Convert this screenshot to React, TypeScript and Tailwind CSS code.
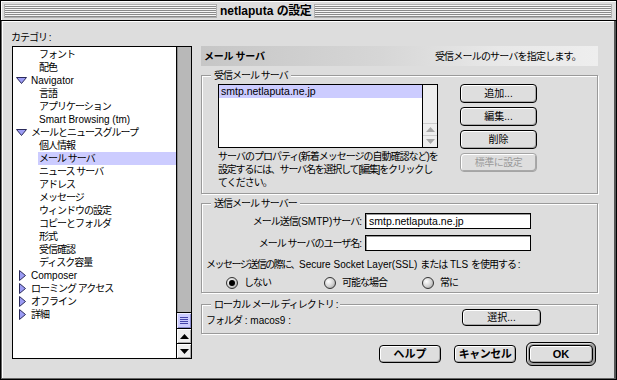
import React from 'react';

type Item = { t: string; lvl: 0 | 1; open?: boolean; sel?: boolean; latin?: boolean };

const items: Item[] = [
  { t: 'フォント', lvl: 1 },
  { t: '配色', lvl: 1 },
  { t: 'Navigator', lvl: 0, open: true, latin: true },
  { t: '言語', lvl: 1 },
  { t: 'アプリケーション', lvl: 1 },
  { t: 'Smart Browsing (tm)', lvl: 1, latin: true },
  { t: 'メールとニュースグループ', lvl: 0, open: true },
  { t: '個人情報', lvl: 1 },
  { t: 'メール サーバ', lvl: 1, sel: true },
  { t: 'ニュース サーバ', lvl: 1 },
  { t: 'アドレス', lvl: 1 },
  { t: 'メッセージ', lvl: 1 },
  { t: 'ウィンドウの設定', lvl: 1 },
  { t: 'コピーとフォルダ', lvl: 1 },
  { t: '形式', lvl: 1 },
  { t: '受信確認', lvl: 1 },
  { t: 'ディスク容量', lvl: 1 },
  { t: 'Composer', lvl: 0, latin: true },
  { t: 'ローミング アクセス', lvl: 0 },
  { t: 'オフライン', lvl: 0 },
  { t: '詳細', lvl: 0 },
];

function J({ children }: { children: React.ReactNode }) {
  return <span className="tracking-[-1px]">{children}</span>;
}

function DownTri() {
  return (
    <svg width="11" height="7" viewBox="0 0 11 7">
      <polygon points="0.5,0.5 10.5,0.5 5.5,6.5" fill="#9c9cf4" stroke="#2a2a5a" strokeWidth="1" />
    </svg>
  );
}

function RightTri() {
  return (
    <svg width="7" height="11" viewBox="0 0 7 11">
      <polygon points="0.5,0.5 6.5,5.5 0.5,10.5" fill="#9c9cf4" stroke="#2a2a5a" strokeWidth="1" />
    </svg>
  );
}

function ArrowUp({ color }: { color: string }) {
  return (
    <svg width="9" height="5" viewBox="0 0 9 5">
      <polygon points="4.5,0 9,5 0,5" fill={color} />
    </svg>
  );
}

function ArrowDown({ color }: { color: string }) {
  return (
    <svg width="9" height="5" viewBox="0 0 9 5">
      <polygon points="0,0 9,0 4.5,5" fill={color} />
    </svg>
  );
}

function Stripes({ className }: { className: string }) {
  return (
    <div
      className={`h-[14px] border border-[#b0b0b0] bg-[image:repeating-linear-gradient(to_bottom,#f6f6f6_0px,#f6f6f6_1px,#8a8a8a_1px,#8a8a8a_2px)] ${className}`}
    />
  );
}

function Btn({
  children,
  className,
  disabled,
}: {
  children: React.ReactNode;
  className: string;
  disabled?: boolean;
}) {
  return (
    <div
      className={`flex items-center justify-center rounded-[4px] border bg-[#dedede] shadow-[inset_1px_1px_0_#ffffff,inset_-1px_-1px_0_#a8a8a8] whitespace-nowrap ${
        disabled ? 'border-[#a4a4a4] text-[#9a9a9a]' : 'border-black text-black'
      } ${className}`}
    >
      {children}
    </div>
  );
}

function Radio({ on }: { on?: boolean }) {
  return (
    <div className="w-[12px] h-[12px] rounded-full border border-[#333333] bg-[image:radial-gradient(circle_at_35%_35%,#ffffff,#d0d0d0_55%,#8e8e8e)] flex items-center justify-center">
      {on && <div className="w-[6px] h-[6px] rounded-full bg-black" />}
    </div>
  );
}

function Group({
  title,
  className,
  children,
}: {
  title: string;
  className: string;
  children: React.ReactNode;
}) {
  return (
    <div
      className={`relative border border-[#9a9a9a] shadow-[inset_1px_1px_0_#ffffff,1px_1px_0_#ffffff] ${className}`}
    >
      <div className="absolute left-[9px] -top-[7px] px-[3px] bg-[#dddddd] leading-[13px] whitespace-nowrap tracking-[-1px]">
        {title}
      </div>
      {children}
    </div>
  );
}

export default function App() {
  return (
    <div className="w-[617px] h-[380px] bg-[#dddddd] border border-black flex flex-col text-[10px] text-black font-['Liberation_Sans','Noto_Sans_CJK_JP',sans-serif] overflow-hidden">
      {/* Title bar */}
      <div className="h-[20px] flex items-center pl-[3px] pr-[4px] border-b border-black shadow-[inset_1px_1px_0_#ffffff]">
        <Stripes className="w-[213px]" />
        <div className="px-[3px] text-[12px] font-bold leading-[14px] whitespace-nowrap">
          netlaputa <span className="tracking-[-0.5px]">の設定</span>
        </div>
        <Stripes className="flex-1" />
      </div>

      {/* Content */}
      <div className="flex-1 flex border-l border-[#666666] border-r-2 border-r-[#555555] border-b border-b-[#666666] shadow-[inset_1px_1px_0_#ffffff]">
        {/* Left column */}
        <div className="ml-[9px] w-[181px] pt-[10px] flex flex-col">
          <div className="h-[13px] leading-[13px] whitespace-nowrap">
            <J>カテゴリ :</J>
          </div>
          <div className="mt-[2px] h-[313px] ml-[1px] border border-black bg-white flex">
            <div className="flex-1 pt-[1px]">
              {items.map((it, i) =>
                it.lvl === 1 ? (
                  <div key={i} className="h-[13px] pl-[25px]">
                    <div
                      className={`h-[13px] leading-[13px] pl-[1px] whitespace-nowrap ${
                        it.sel ? 'bg-[#ccccff]' : ''
                      } ${it.latin ? '' : 'tracking-[-1px]'}`}
                    >
                      {it.t}
                    </div>
                  </div>
                ) : (
                  <div key={i} className="h-[13px] leading-[13px] flex items-center pl-[3px] whitespace-nowrap">
                    <div className="w-[15px] h-[13px] flex items-center">
                      {it.open ? (
                        <DownTri />
                      ) : (
                        <div className="ml-[3px] flex items-center">
                          <RightTri />
                        </div>
                      )}
                    </div>
                    <span className={it.latin ? '' : 'tracking-[-1px]'}>{it.t}</span>
                  </div>
                ),
              )}
            </div>
            <div className="w-[15px] border-l border-black flex flex-col">
              <div className="flex-1 bg-[#b8b8b8] shadow-[inset_1px_0_0_#8c8c8c]" />
              <div className="h-[16px] bg-[#ccccff] border-t border-black flex flex-col items-center justify-center gap-[1px] shadow-[inset_1px_1px_0_#eeeeff,inset_-1px_-1px_0_#8888cc]">
                <div className="w-[8px] h-[1px] bg-[#4444aa]" />
                <div className="w-[8px] h-[1px] bg-[#4444aa]" />
                <div className="w-[8px] h-[1px] bg-[#4444aa]" />
                <div className="w-[8px] h-[1px] bg-[#4444aa]" />
              </div>
              <div className="h-[15px] bg-[#eeeeee] border-t border-black flex items-center justify-center shadow-[inset_1px_1px_0_#ffffff,inset_-1px_-1px_0_#aaaaaa]">
                <ArrowUp color="#000000" />
              </div>
              <div className="h-[15px] bg-[#eeeeee] border-t border-black flex items-center justify-center shadow-[inset_1px_1px_0_#ffffff,inset_-1px_-1px_0_#aaaaaa]">
                <ArrowDown color="#000000" />
              </div>
            </div>
          </div>
        </div>

        {/* Right column */}
        <div className="ml-[9px] w-[397px] pt-[25px] flex flex-col">
          {/* Header band */}
          <div className="h-[20px] flex items-center justify-between pl-[3px] pr-[17px] bg-[image:linear-gradient(to_right,#c6c6c6,#d6d6d6_45%,#e8e8e8_75%,#eeeeee)]">
            <span className="font-bold text-[10px] whitespace-nowrap tracking-[-0.3px]">メール サーバ</span>
            <span className="whitespace-nowrap tracking-[-0.8px]">受信メールのサーバを指定します。</span>
          </div>

          {/* Group 1 */}
          <Group title="受信メール サーバ" className="mt-[9px] h-[119px]">
            <div className="flex pt-[8px] pl-[16px]">
              <div className="w-[220px] flex flex-col">
                <div className="h-[64px] border border-black bg-white flex">
                  <div className="flex-1">
                    <div className="h-[13px] leading-[13px] pl-[2px] bg-[#ccccff] whitespace-nowrap text-[10.5px]">
                      smtp.netlaputa.ne.jp
                    </div>
                  </div>
                  <div className="w-[15px] border-l border-black bg-[#eeeeee] flex flex-col justify-end">
                    <div className="h-[12px] flex items-center justify-center border-t border-[#cccccc]">
                      <ArrowUp color="#a8a8a8" />
                    </div>
                    <div className="h-[12px] flex items-center justify-center border-t border-[#cccccc]">
                      <ArrowDown color="#a8a8a8" />
                    </div>
                  </div>
                </div>
                <div className="mt-[2px] leading-[13px] whitespace-nowrap tracking-[-1px]">
                  <div>サーバのプロパティ(新着メッセージの自動確認など)を</div>
                  <div className="tracking-[-1.2px]">設定するには、サーバ名を選択して[編集]をクリックし</div>
                  <div>てください。</div>
                </div>
              </div>
              <div className="ml-[22px] flex flex-col gap-[4px]">
                <Btn className="w-[77px] h-[19px]">追加...</Btn>
                <Btn className="w-[77px] h-[19px]">編集...</Btn>
                <Btn className="w-[77px] h-[19px]">削除</Btn>
                <Btn className="w-[77px] h-[19px] tracking-[-0.5px]" disabled>
                  標準に設定
                </Btn>
              </div>
            </div>
          </Group>

          {/* Group 2 */}
          <Group title="送信メール サーバー" className="mt-[9px] h-[90px]">
            <div className="pt-[9px] flex flex-col">
              <div className="flex items-center">
                <div className="w-[159px] text-right whitespace-nowrap">
                  <J>メール送信</J>(SMTP)<J>サーバ:</J>
                </div>
                <div className="ml-[4px] w-[166px] h-[16px] border border-black bg-white shadow-[inset_1px_1px_0_#999999] leading-[14px] pl-[3px] whitespace-nowrap text-[10.5px]">
                  smtp.netlaputa.ne.jp
                </div>
              </div>
              <div className="mt-[6px] flex items-center">
                <div className="w-[159px] text-right whitespace-nowrap">
                  <J>メール サーバのユーザ名:</J>
                </div>
                <div className="ml-[4px] w-[166px] h-[16px] border border-black bg-white shadow-[inset_1px_1px_0_#999999]" />
              </div>
              <div className="mt-[7px] pl-[4px] h-[13px] leading-[13px] whitespace-nowrap">
                <span className="tracking-[-1.5px]">メッセージ送信の際に、</span>
                <span>Secure Socket Layer(SSL)</span> <J>または</J> <span>TLS</span> <J>を使用する :</J>
              </div>
              <div className="mt-[5px] pl-[24px] flex h-[13px] items-center">
                <div className="w-[98px] flex items-center gap-[6px]">
                  <Radio on />
                  <J>しない</J>
                </div>
                <div className="w-[98px] flex items-center gap-[6px]">
                  <Radio />
                  <J>可能な場合</J>
                </div>
                <div className="w-[98px] flex items-center gap-[6px]">
                  <Radio />
                  <J>常に</J>
                </div>
              </div>
            </div>
          </Group>

          {/* Group 3 */}
          <Group title="ローカル メール ディレクトリ :" className="mt-[11px] h-[30px]">
            <div className="flex items-start">
              <div className="mt-[9px] pl-[4px] w-[260px] leading-[13px] whitespace-nowrap">
                <J>フォルダ</J> : macos9 :
              </div>
              <Btn className="mt-[4px] w-[79px] h-[17px]">選択...</Btn>
            </div>
          </Group>

          {/* Bottom buttons */}
          <div className="mt-[8px] flex items-center justify-end pr-[2px]">
            <Btn className="w-[62px] h-[18px] font-bold text-[11px]">ヘルプ</Btn>
            <Btn className="ml-[13px] w-[62px] h-[18px] font-bold text-[11px] tracking-[-0.5px]">キャンセル</Btn>
            <div className="ml-[10px] w-[70px] h-[24px] rounded-[6px] border border-black bg-[#a0a0a0] p-[2px] shadow-[inset_1px_1px_0_#dddddd]">
              <Btn className="w-full h-full font-bold text-[11px]">OK</Btn>
            </div>
          </div>
        </div>
      </div>
    </div>
  );
}
